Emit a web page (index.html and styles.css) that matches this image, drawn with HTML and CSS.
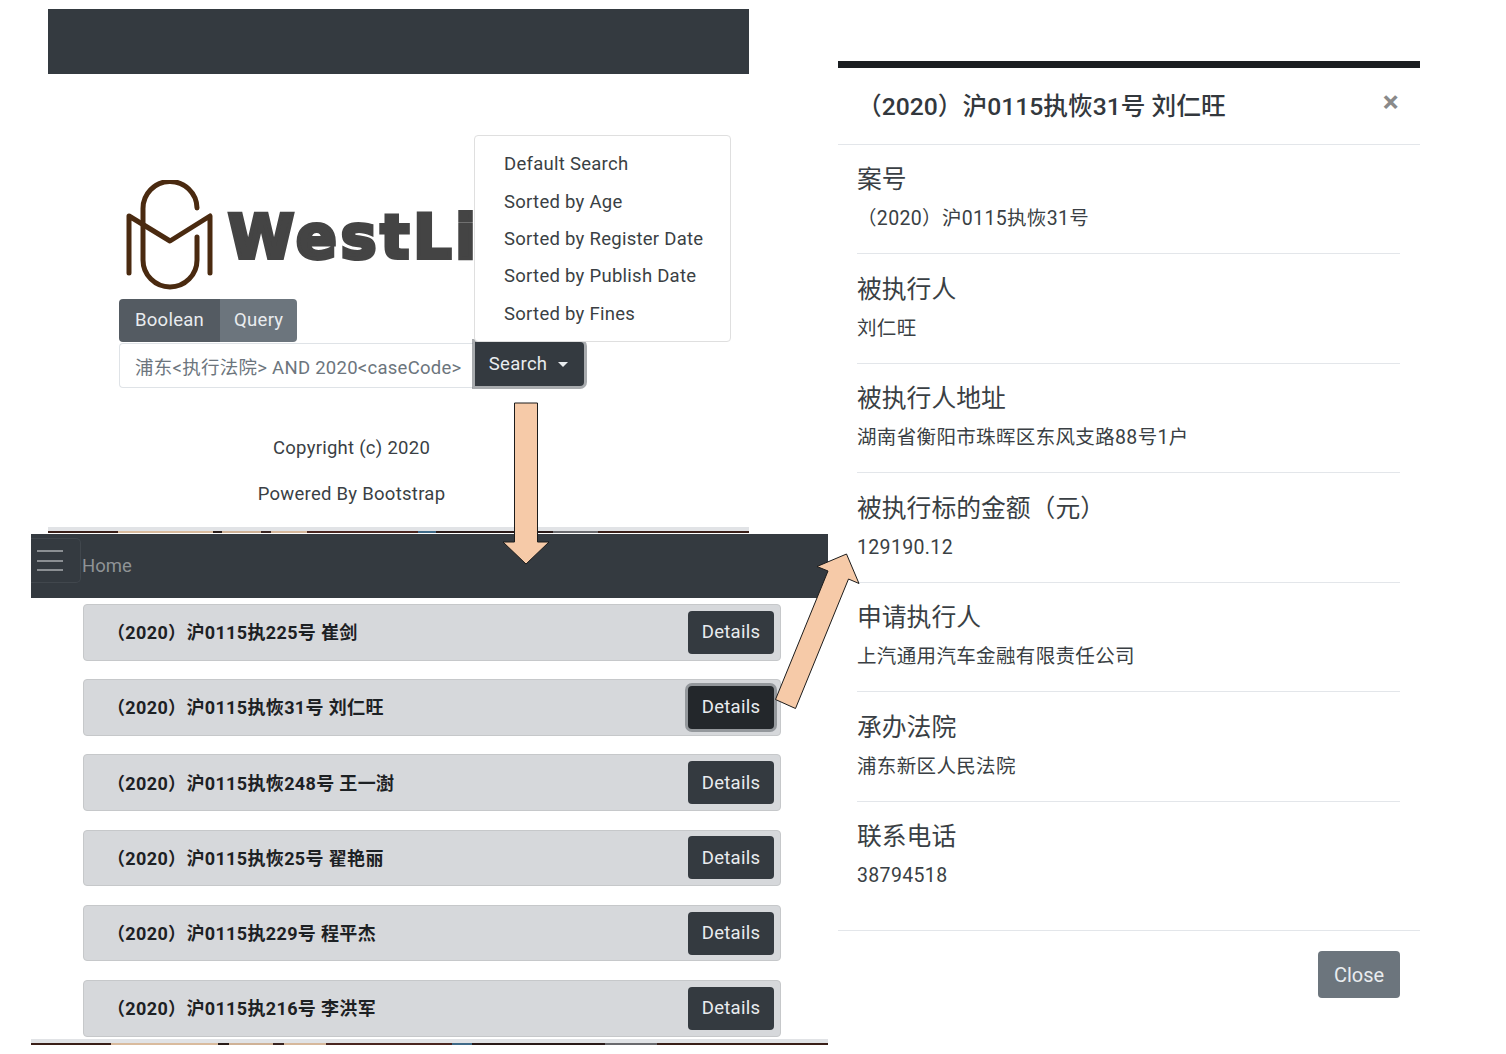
FILE: index.html
```html
<!DOCTYPE html>
<html lang="zh">
<head>
    <meta charset="UTF-8">
    <meta name="viewport" content="width=device-width, initial-scale=1.0">
    <title>WestLaw Search</title>
    <link rel="stylesheet" href="styles.css">
</head>
<body>
    <div class="canvas">
        <section class="shot shot-search">
            <div class="navbar"></div>
            <div class="search-col">
                <div class="logo">
                    <svg class="logo-mark" viewBox="0 0 90 110" width="90" height="110" fill="none" stroke="#4a2a10" stroke-width="5" stroke-linecap="round" stroke-linejoin="round">
                        <path d="M4 93V36L45 61L85 36V93"/>
                        <path d="M72 28A27 27 0 0 0 18 29V80A27 27 0 0 0 72 80V57"/>
                    </svg>
                    <span class="logo-text">WestLi</span>
                </div>
                <div class="btn-group">
                    <span class="seg seg-active">Boolean</span>
                    <span class="seg">Query</span>
                </div>
                <div class="search-row">
                    <div class="search-input">浦东&lt;执行法院&gt; AND 2020&lt;caseCode&gt;</div>
                    <button class="search-btn">Search <span class="caret"></span></button>
                </div>
                <p class="copy copy-first">Copyright (c) 2020</p>
                <p class="copy">Powered By Bootstrap</p>
            </div>
            <div class="dropdown">
                <div class="dropdown-item">Default Search</div>
                <div class="dropdown-item">Sorted by Age</div>
                <div class="dropdown-item">Sorted by Register Date</div>
                <div class="dropdown-item">Sorted by Publish Date</div>
                <div class="dropdown-item">Sorted by Fines</div>
            </div>
            <div class="photo-strip"></div>
        </section>

        <section class="shot shot-results">
            <div class="navbar navbar-home">
                <div class="toggler"><span></span><span></span><span></span></div>
                <span class="home-link">Home</span>
            </div>
            <div class="results">
                <div class="result"><span class="result-name">（2020）沪0115执225号 崔剑</span><button class="details">Details</button></div>
                <div class="result"><span class="result-name">（2020）沪0115执恢31号 刘仁旺</span><button class="details details-focus">Details</button></div>
                <div class="result"><span class="result-name">（2020）沪0115执恢248号 王一澍</span><button class="details">Details</button></div>
                <div class="result"><span class="result-name">（2020）沪0115执恢25号 翟艳丽</span><button class="details">Details</button></div>
                <div class="result"><span class="result-name">（2020）沪0115执229号 程平杰</span><button class="details">Details</button></div>
                <div class="result"><span class="result-name">（2020）沪0115执216号 李洪军</span><button class="details">Details</button></div>
            </div>
            <div class="photo-strip"></div>
        </section>

        <section class="shot shot-modal">
            <div class="modal-head">
                <span class="modal-title">（2020）沪0115执恢31号 刘仁旺</span>
                <span class="modal-x">×</span>
            </div>
            <div class="modal-body">
                <div class="field"><div class="field-label">案号</div><div class="field-value">（2020）沪0115执恢31号</div></div>
                <div class="field"><div class="field-label">被执行人</div><div class="field-value">刘仁旺</div></div>
                <div class="field"><div class="field-label">被执行人地址</div><div class="field-value">湖南省衡阳市珠晖区东风支路88号1户</div></div>
                <div class="field"><div class="field-label">被执行标的金额（元）</div><div class="field-value">129190.12</div></div>
                <div class="field"><div class="field-label">申请执行人</div><div class="field-value">上汽通用汽车金融有限责任公司</div></div>
                <div class="field"><div class="field-label">承办法院</div><div class="field-value">浦东新区人民法院</div></div>
                <div class="field"><div class="field-label">联系电话</div><div class="field-value">38794518</div></div>
            </div>
            <div class="modal-foot"><button class="close-btn">Close</button></div>
        </section>

        <svg class="arrows" viewBox="0 0 1506 1054" width="1506" height="1054" fill="#f6caa8" stroke="#1c1c1c" stroke-width="1">
            <path d="M514.5 403H537.5V542H549L526 564L503 542H514.5Z"/>
            <path d="M775.5 699.5L795.5 708.5L848.5 579L859 583.5L846.5 554L817 566.5L828 571Z"/>
        </svg>
    </div>
</body>
</html>
```

FILE: styles.css
```css
html, body {
    margin: 0;
    height: 100%;
    overflow: hidden;
    background: white;
}
body {
    font-family: Roboto, "Noto Sans CJK SC", sans-serif;
    font-size: 18.5px;
    letter-spacing: 0.27px;
    color: #3a3f44;
}
button {
    font-family: inherit;
    font-size: inherit;
    letter-spacing: inherit;
    border: none;
    color: #e9ecef;
}
.canvas {
    position: relative;
    width: 1506px;
    height: 1054px;
}

/* the three screenshots sit on a free canvas */
.shot {
    position: absolute;
    display: flex;
    flex-direction: column;
    background: white;
}
.shot-search {
    left: 48px;
    top: 9px;
    width: 701px;
    height: 524px;
}
.shot-results {
    left: 31px;
    top: 534px;
    width: 797px;
    height: 511px;
}
.shot-modal {
    left: 838px;
    top: 61px;
    width: 582px;
    height: 957px;
    border-top: 7px solid #1b1e21;
    box-sizing: border-box;
}
.arrows {
    position: absolute;
    left: 0;
    top: 0;
    pointer-events: none;
}

.navbar {
    background-color: #343a40;
    height: 65px;
    flex: none;
}
.navbar-home {
    height: 64px;
    display: flex;
    align-items: center;
}
.toggler {
    box-sizing: border-box;
    width: 50px;
    height: 45px;
    margin-top: -11px;
    padding: 0 17px 0 6px;
    border: 1px solid #41474d;
    border-left: none;
    border-radius: 0 5px 5px 0;
    display: flex;
    flex-direction: column;
    justify-content: center;
    gap: 7.5px;
}
.toggler span {
    height: 2px;
    background: #8b8f93;
}
.home-link {
    color: #8f9396;
    margin-left: 1px;
    letter-spacing: 0;
}

.search-col {
    width: 465px;
    margin-left: 71px;
    padding-top: 106px;
}
.logo {
    display: flex;
    align-items: center;
    height: 110px;
    padding-left: 6px;
}
.logo-mark {
    flex: none;
}
.logo-text {
    font-family: "DejaVu Sans", sans-serif;
    font-weight: 700;
    font-size: 60px;
    letter-spacing: 4px;
    color: #444;
    margin-left: 13px;
    margin-top: 4px;
    -webkit-text-stroke: 4px #444;
}
.btn-group {
    display: inline-flex;
    margin-top: 9px;
    height: 43px;
    border-radius: 4px;
    overflow: hidden;
    color: #e9ecef;
    line-height: 43px;
}
.seg {
    background-color: #6c757d;
    padding: 0 14px;
}
.seg-active {
    background-color: #545b62;
    padding: 0 16px;
}
.search-row {
    display: flex;
    align-items: flex-start;
}
.search-input {
    box-sizing: border-box;
    width: 354px;
    height: 45px;
    margin-top: 1px;
    padding: 2px 0 0 15px;
    line-height: 44px;
    border: 1px solid #dfe3e7;
    border-right: none;
    border-radius: 4px 0 0 4px;
    color: #6c757d;
    white-space: nowrap;
}
.search-btn {
    width: 109px;
    height: 44px;
    margin-left: 2px;
    padding: 0 2px 0 0;
    background-color: #343a40;
    border-radius: 0 4px 4px 0;
    box-shadow: 0 0 0 3px rgba(82, 88, 93, 0.5);
}
.caret {
    display: inline-block;
    margin-left: 6px;
    vertical-align: 3px;
    border-top: 5px solid #e9ecef;
    border-left: 5px solid transparent;
    border-right: 5px solid transparent;
}
.copy {
    margin: 24px 0 0;
    text-align: center;
    line-height: 22px;
}
.copy-first {
    margin-top: 49px;
}
.dropdown {
    position: absolute;
    left: 426px;
    top: 126px;
    box-sizing: border-box;
    width: 257px;
    height: 207px;
    padding: 10.4px 0 0;
    background: white;
    border: 1px solid #dfdfdf;
    border-radius: 4px;
}
.dropdown-item {
    padding-left: 29px;
    height: 37.3px;
    line-height: 37.3px;
    white-space: nowrap;
}
.photo-strip {
    margin-top: auto;
    height: 6px;
    flex: none;
    border-top: 4px solid #e1e3e6;
    box-sizing: border-box;
    background: linear-gradient(90deg, #3a1f18 0 10%, #d9bb9e 10% 23.5%, #2a1c18 23.5% 24.8%, #cfb297 24.8% 30.4%, #3a2420 30.4% 31.8%, #d6b89c 31.8% 37%, #4a2620 37% 52.8%, #3f6a88 52.8% 55.3%, #2a1a18 55.3% 72%, #6a6a6e 72% 78.5%, #3a1f18 78.5% 100%);
}

.results {
    margin: 6px 47px 0 52px;
    display: flex;
    flex-direction: column;
    gap: 18.6px;
}
.result {
    box-sizing: border-box;
    height: 56.6px;
    display: flex;
    align-items: center;
    justify-content: space-between;
    padding: 0 6px 0 23px;
    background-color: #d6d8db;
    border: 1px solid #c6c8ca;
    border-radius: 4px;
}
.result-name {
    font-weight: 700;
    color: #1d2124;
    font-size: 18px;
    letter-spacing: 0.35px;
    margin-top: -2px;
}
.details {
    width: 86px;
    height: 43px;
    padding: 0;
    background-color: #343a40;
    border-radius: 4px;
}
.details-focus {
    background-color: #23272b;
    box-shadow: 0 0 0 3px rgba(82, 88, 93, 0.5);
}

.modal-head {
    box-sizing: border-box;
    height: 77px;
    display: flex;
    justify-content: space-between;
    padding: 0 20px 0 19px;
    border-bottom: 1px solid #e3e6ea;
}
.modal-title {
    font-size: 24.7px;
    font-weight: 500;
    letter-spacing: 0;
    line-height: 76px;
    margin-top: 1px;
    color: #33383d;
}
.modal-x {
    font-size: 30px;
    font-weight: 700;
    color: #8a8a8a;
    line-height: 68px;
    margin-right: 1px;
}
.modal-body {
    padding: 0 20px 0 19px;
    margin-top: -0.5px;
    flex: 1;
}
.field {
    padding: 20.5px 0 20px;
    border-bottom: 1px solid #e3e6ea;
}
.field:last-child {
    border-bottom: none;
}
.field-label {
    font-size: 24.8px;
    letter-spacing: 0;
    line-height: 30px;
    color: #3a3f44;
}
.field-value {
    font-size: 19.5px;
    letter-spacing: 0.35px;
    line-height: 28px;
    margin-top: 10px;
    color: #3a3f44;
}
.modal-foot {
    box-sizing: border-box;
    height: 88px;
    padding: 20px 20px 0 0;
    border-top: 1px solid #e3e6ea;
    display: flex;
    justify-content: flex-end;
    align-items: flex-start;
}
.close-btn {
    width: 82px;
    height: 47px;
    padding: 0;
    background-color: #6c757d;
    border-radius: 4px;
    font-size: 20px;
    letter-spacing: 0;
}
```
